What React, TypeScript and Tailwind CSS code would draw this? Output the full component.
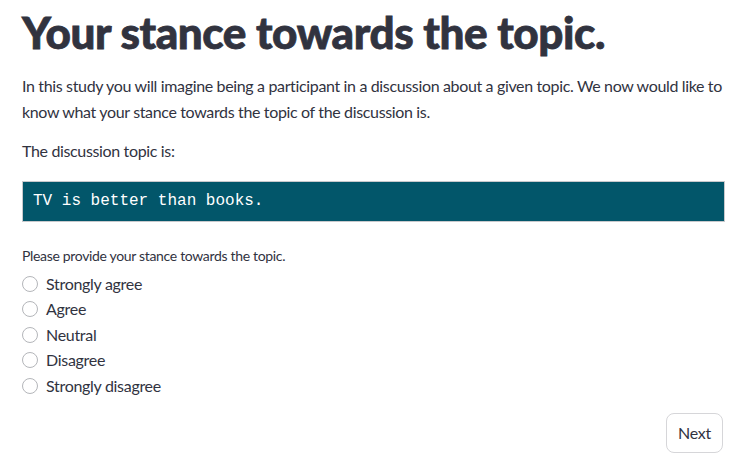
import React, { useState } from 'react';

const options = ['Strongly agree', 'Agree', 'Neutral', 'Disagree', 'Strongly disagree'];

export default function App() {
  const [stance, setStance] = useState<string | null>(null);

  return (
    <div className="min-h-[472px] w-[747px] bg-white px-[22px] text-[#31333F] font-['Lato','Noto_Sans',sans-serif]">
      <h1 className="pt-[6px] text-[44px] font-black leading-[52px] tracking-[-0.4px] [-webkit-text-stroke:0.8px_#31333F]">
        Your stance towards the topic.
      </h1>

      <p className="mt-[15px] text-[16px] leading-[25.6px] tracking-[-0.35px]">
        In this study you will imagine being a participant in a discussion about a given topic. We now would like to
        know what your stance towards the topic of the discussion is.
      </p>

      <p className="mt-[14px] text-[16px] leading-[25.6px] tracking-[-0.35px]">The discussion topic is:</p>

      <div className="mt-[17px] flex h-[41px] items-center border border-[#c8c9cc] bg-[#02566a] px-[10px] font-['Liberation_Mono',monospace] text-[16px] text-white">
        TV is better than books.
      </div>

      <div className="mt-[24px] text-[14px] leading-[20px] tracking-[-0.33px]">
        Please provide your stance towards the topic.
      </div>

      {/* Radio group */}
      <div className="mt-[5px] flex flex-col">
        {options.map(opt => (
          <label
            key={opt}
            onClick={() => setStance(opt)}
            className="flex h-[25.6px] cursor-pointer items-center gap-[8px] text-[16px] tracking-[-0.3px]"
          >
            <span
              className={`flex h-[16px] w-[16px] items-center justify-center rounded-full border ${
                stance === opt ? 'border-[#ff4b4b] bg-[#ff4b4b]' : 'border-[#b4b6ba] bg-white'
              }`}
            >
              {stance === opt && <span className="h-[6px] w-[6px] rounded-full bg-white" />}
            </span>
            {opt}
          </label>
        ))}
      </div>

      <div className="mt-[14px] flex justify-end pr-[2px]">
        <button className="h-[40px] w-[57px] rounded-[8px] border border-[#d6d6d9] bg-white text-[16px] tracking-[-0.3px]">
          Next
        </button>
      </div>
    </div>
  );
}
